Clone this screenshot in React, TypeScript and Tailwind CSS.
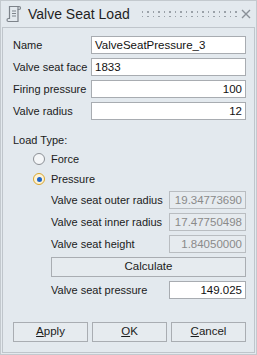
import React from "react";

const font = { fontFamily: '"Liberation Sans", Arial, sans-serif' };

function Field({ label, value, right }: { label: string; value: string; right?: boolean }) {
  return (
    <div className="flex items-center h-[18px]">
      <div className="w-[78px] shrink-0 whitespace-nowrap text-[11px] text-[#1b1b1b] leading-none">{label}</div>
      <div
        className={`w-[155px] shrink-0 h-[18px] bg-white border border-[#a8acb1] text-[11.5px] leading-[16px] px-[3px] text-[#111] whitespace-nowrap ${
          right ? "text-right" : "text-left"
        }`}
      >
        {value}
      </div>
    </div>
  );
}

function SubField({ label, value, disabled }: { label: string; value: string; disabled?: boolean }) {
  return (
    <div className="flex items-center h-[18px] pl-[38px]">
      <div className="w-[118px] shrink-0 whitespace-nowrap text-[11px] text-[#1b1b1b] leading-none">{label}</div>
      <div
        className={`w-[77px] shrink-0 h-[18px] border text-[11.5px] leading-[16px] px-[3px] text-right whitespace-nowrap ${
          disabled ? "bg-[#e6ebef] border-[#b9bdc1] text-[#8a8a8a]" : "bg-white border-[#a8acb1] text-[#111]"
        }`}
      >
        {value}
      </div>
    </div>
  );
}

function Radio({ label, checked }: { label: string; checked?: boolean }) {
  return (
    <div className="flex items-center h-[20px] pl-[20px]">
      {checked ? (
        <div className="w-[12px] h-[12px] rounded-full border border-[#d9a62e] bg-[#fdf3d6] flex items-center justify-center">
          <div className="w-[5px] h-[5px] rounded-full bg-[#1c63c9]" />
        </div>
      ) : (
        <div className="w-[12px] h-[12px] rounded-full border border-[#8c9096] bg-[#f4f6f8]" />
      )}
      <span className="ml-[6px] text-[11px] text-[#1b1b1b] leading-none">{label}</span>
    </div>
  );
}

function Btn({ children, w }: { children: React.ReactNode; w: string }) {
  return (
    <div
      className={`${w} h-[20px] border border-[#a9adb2] bg-[#e6ebef] flex items-center justify-center text-[11.5px] text-[#1b1b1b] leading-none`}
    >
      {children}
    </div>
  );
}

export default function App() {
  return (
    <div style={font} className="w-[257px] h-[355px] bg-[#e3e9ee] border border-[#c3c9ce] flex flex-col">
      {/* Title bar */}
      <div className="h-[26px] flex items-center pl-[5px] pr-[5px]">
        <svg width="16" height="18" viewBox="0 0 16 18" fill="none" stroke="#7d838a" strokeWidth="1.2" className="shrink-0">
          <path d="M3.5 1.5 H13 a1.5 1.5 0 0 1 0 3 H12 V16.5 H2.5 a1.5 1.5 0 0 1 0-3 H3.5 Z" />
          <path d="M12 4.5 V1.5" />
          <path d="M6 6 H10 M6 8.5 H10 M6 11 H10" />
        </svg>
        <span className="ml-[6px] shrink-0 whitespace-nowrap text-[14px] text-[#1f1f1f] leading-none">Valve Seat Load</span>
        <div className="ml-[12px] flex-1 overflow-hidden flex flex-col gap-[3px] justify-center">
          <div className="flex gap-[4px]">
            {Array.from({ length: 24 }).map((_, i) => (
              <div key={i} className="w-[1.5px] h-[1.5px] shrink-0 bg-[#9aa1a8]" />
            ))}
          </div>
          <div className="flex gap-[4px]">
            {Array.from({ length: 24 }).map((_, i) => (
              <div key={i} className="w-[1.5px] h-[1.5px] shrink-0 bg-[#9aa1a8]" />
            ))}
          </div>
        </div>
        <svg width="10" height="10" viewBox="0 0 10 10" className="ml-[4px] shrink-0" stroke="#8a9098" strokeWidth="1.4">
          <path d="M1 1 L9 9 M9 1 L1 9" />
        </svg>
      </div>
      {/* Panel */}
      <div className="mx-[1px] flex-1 mb-[1px] border border-[#bfc5cb] pl-[10px] pt-[8px] flex flex-col">
        <div className="flex flex-col gap-[4px]">
          <Field label="Name" value="ValveSeatPressure_3" />
          <Field label="Valve seat face" value="1833" />
          <Field label="Firing pressure" value="100" right />
          <Field label="Valve radius" value="12" right />
        </div>
        <div className="mt-[15px] text-[11px] text-[#1b1b1b] leading-none">Load Type:</div>
        <div className="mt-[3px] flex flex-col">
          <Radio label="Force" />
          <Radio label="Pressure" checked />
        </div>
        <div className="mt-[2px] flex flex-col gap-[4px]">
          <SubField label="Valve seat outer radius" value="19.34773690" disabled />
          <SubField label="Valve seat inner radius" value="17.47750498" disabled />
          <SubField label="Valve seat height" value="1.84050000" disabled />
          <div className="pl-[38px]">
            <Btn w="w-[195px]">Calculate</Btn>
          </div>
          <SubField label="Valve seat pressure" value="149.025" />
        </div>
        <div className="mt-[23px] flex gap-[4px]">
          <Btn w="w-[75px]">
            <span>
              <span className="underline">A</span>pply
            </span>
          </Btn>
          <Btn w="w-[75px]">
            <span>
              <span className="underline">O</span>K
            </span>
          </Btn>
          <Btn w="w-[75px]">
            <span>
              <span className="underline">C</span>ancel
            </span>
          </Btn>
        </div>
      </div>
    </div>
  );
}
